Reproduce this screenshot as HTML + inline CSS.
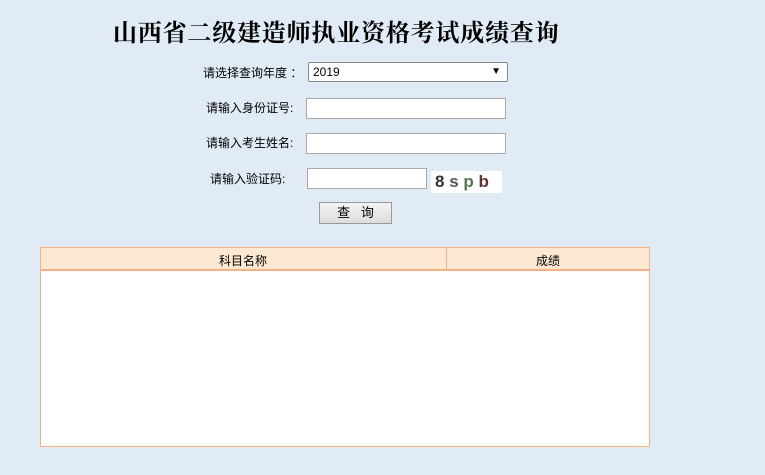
<!DOCTYPE html>
<html><head><meta charset="utf-8"><style>
body{margin:0;width:765px;height:475px;background:#e0ebf5;position:relative;overflow:hidden;font-family:"Liberation Sans","Noto Sans CJK SC",sans-serif;font-size:12px;color:#000}
.a{position:absolute;white-space:nowrap}
.title{left:113px;top:13px;font-family:"Liberation Serif","Noto Serif CJK SC",serif;font-weight:bold;font-size:24px;letter-spacing:0.8px}
.inp{position:absolute;background:#fff;border:1px solid #a9a9a9;box-sizing:border-box}
</style></head><body>
<div class="a title">山西省二级建造师执业资格考试成绩查询</div>
<div class="a" style="left:203px;top:64px">请选择查询年度 ：</div>
<div class="inp" style="left:308px;top:62px;width:200px;height:20px;border-color:#888;border-radius:2px"><span class="a" style="left:4px;top:2px">2019</span><span class="a" style="right:6px;top:3px;font-size:10px">▼</span></div>
<div class="a" style="left:206px;top:99px">请输入身份证号:</div>
<div class="inp" style="left:306px;top:98px;width:200px;height:21px"></div>
<div class="a" style="left:206px;top:134px">请输入考生姓名:</div>
<div class="inp" style="left:306px;top:133px;width:200px;height:21px"></div>
<div class="a" style="left:210px;top:170px">请输入验证码:</div>
<div class="inp" style="left:307px;top:168px;width:120px;height:21px"></div>
<div class="a" style="left:431px;top:171px;width:71px;height:22px;background:#fff;font-size:17px;line-height:22px;font-weight:bold"><span style="color:#333;margin-left:4px">8</span> <span style="color:#555">s</span> <span style="color:#575">p</span> <span style="color:#633">b</span></div>
<div class="a" style="left:319px;top:202px;width:73px;height:22px;box-sizing:border-box;border:1px solid #999;background:linear-gradient(#f4f4f4,#dcdcdc);text-align:center;line-height:20px;font-size:13px">查 &nbsp; 询</div>
<div class="a" style="left:40px;top:247px;width:610px;height:200px;box-sizing:border-box;border:1px solid #f4b183;background:#fff"></div>
<div class="a" style="left:40px;top:247px;width:610px;height:24px;box-sizing:border-box;border:1px solid #f4b183;border-bottom-width:2px;background:#fde9d1"></div>
<div class="a" style="left:446px;top:247px;width:1px;height:24px;background:#f4b183"></div>
<div class="a" style="left:40px;top:252px;width:406px;text-align:center">科目名称</div>
<div class="a" style="left:447px;top:252px;width:202px;text-align:center">成绩</div>
</body></html>
